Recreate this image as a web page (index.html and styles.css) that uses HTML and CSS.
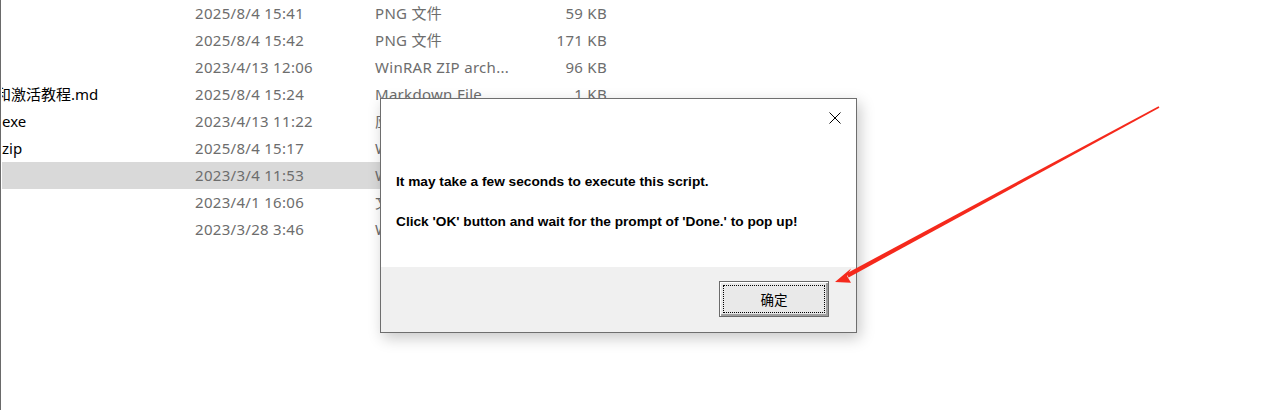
FILE: index.html
```html
<!DOCTYPE html>
<html lang="zh-CN">
<head>
<meta charset="utf-8">
<title>Script prompt</title>
<link rel="stylesheet" href="styles.css">
</head>
<body>
<div class="explorer">
  <div class="list">
    <div class="row"><span class="name"></span><span class="date">2025/8/4 15:41</span><span class="type">PNG 文件</span><span class="size">59 KB</span></div>
    <div class="row"><span class="name"></span><span class="date">2025/8/4 15:42</span><span class="type">PNG 文件</span><span class="size">171 KB</span></div>
    <div class="row"><span class="name"></span><span class="date">2023/4/13 12:06</span><span class="type">WinRAR ZIP arch...</span><span class="size">96 KB</span></div>
    <div class="row"><span class="name"><span class="cut">和激活教程.md</span></span><span class="date">2025/8/4 15:24</span><span class="type">Markdown File</span><span class="size">1 KB</span></div>
    <div class="row"><span class="name">exe</span><span class="date">2023/4/13 11:22</span><span class="type">应用程序</span><span class="size">2,048 KB</span></div>
    <div class="row"><span class="name">zip</span><span class="date">2025/8/4 15:17</span><span class="type">WinRAR ZIP arch...</span><span class="size">1,024 KB</span></div>
    <div class="row selected"><span class="name"></span><span class="date">2023/3/4 11:53</span><span class="type">WinRAR ZIP arch...</span><span class="size">12 KB</span></div>
    <div class="row"><span class="name"></span><span class="date">2023/4/1 16:06</span><span class="type">文本文档</span><span class="size">1 KB</span></div>
    <div class="row"><span class="name"></span><span class="date">2023/3/28 3:46</span><span class="type">WinRAR ZIP arch...</span><span class="size">8 KB</span></div>
  </div>
</div>

<div class="dialog">
  <div class="dialog-body">
    <div class="titlebar">
      <span class="close" aria-label="关闭">
        <svg width="12" height="12" viewBox="0 0 12 12"><path d="M0.5 0.5 L11.5 11.5 M11.5 0.5 L0.5 11.5" stroke="#000" stroke-width="1" fill="none"/></svg>
      </span>
    </div>
    <div class="messages">
      <p class="msg">It may take a few seconds to execute this script.</p>
      <p class="msg">Click 'OK' button and wait for the prompt of 'Done.' to pop up!</p>
    </div>
  </div>
  <div class="dialog-footer">
    <button class="ok"><span class="focus">确定</span></button>
  </div>
</div>

<svg class="arrow" width="1268" height="410" viewBox="0 0 1268 410">
  <polygon fill="#f5291c" points="1159.4,107.7 1158.6,106.3 846.4,273.4 848.6,277.4"/>
  <polygon fill="#f5291c" points="835,282 851,268.5 847,276 851,282.8"/>
</svg>
</body>
</html>
```
FILE: styles.css
```css
html, body {
  margin: 0;
  padding: 0;
  background: #fff;
  width: 1268px;
  height: 410px;
  overflow: hidden;
}

body {
  position: relative;
  font-family: "Noto Sans", "Noto Sans CJK SC", sans-serif;
}

.explorer {
  height: 410px;
  border-left: 1px solid #6a6a6a;
  padding-left: 1px;
}

.list {
  display: flex;
  flex-direction: column;
}

.row {
  display: grid;
  grid-template-columns: 193px 180px 150px 82px;
  height: 27px;
  box-sizing: border-box;
  padding-bottom: 2px;
  align-items: center;
  width: 660px;
  font-size: 15px;
  letter-spacing: 0.3px;
  color: #6d6d6d;
  white-space: nowrap;
}

.row.selected {
  background: #d9d9d9;
}

.name {
  color: #000;
  overflow: hidden;
  letter-spacing: 0;
}

.cut {
  display: inline-block;
  margin-left: -6px;
}

.size {
  text-align: right;
}

.dialog {
  position: absolute;
  left: 380px;
  top: 98px;
  width: 475px;
  height: 233px;
  border: 1px solid #6e6e6e;
  background: #fff;
  box-shadow: 3px 5px 14px rgba(0, 0, 0, 0.22);
  display: flex;
  flex-direction: column;
  font-family: "Liberation Sans", "Noto Sans CJK SC", sans-serif;
}

.dialog-body {
  flex: 1;
  padding-left: 15px;
}

.titlebar {
  height: 38px;
  display: flex;
  justify-content: flex-end;
  align-items: center;
  padding-right: 15px;
}

.close {
  display: flex;
  width: 12px;
  height: 12px;
}

.messages {
  display: flex;
  flex-direction: column;
  gap: 20px;
  padding-top: 35px;
}

.msg {
  margin: 0;
  line-height: 20px;
  font-size: 13.7px;
  font-weight: bold;
  color: #000;
  white-space: nowrap;
}

.dialog-footer {
  height: 65px;
  background: #f0f0f0;
  display: flex;
  justify-content: flex-end;
  align-items: flex-start;
  padding: 14px 27px 0 0;
  box-sizing: border-box;
}

.ok {
  width: 110px;
  height: 36px;
  padding: 3px;
  margin: 0;
  border: 1px solid #6b6b6b;
  background: #e9e9e9;
  box-shadow: inset 1px 1px 0 #fff, inset -2px -2px 0 #a0a0a0;
  font-family: "Noto Sans CJK SC", sans-serif;
  font-size: 13.5px;
  color: #000;
  display: flex;
}

.focus {
  flex: 1;
  border: 1px dotted #000;
  display: flex;
  align-items: center;
  justify-content: center;
}

.arrow {
  position: absolute;
  left: 0;
  top: 0;
  pointer-events: none;
}
```
